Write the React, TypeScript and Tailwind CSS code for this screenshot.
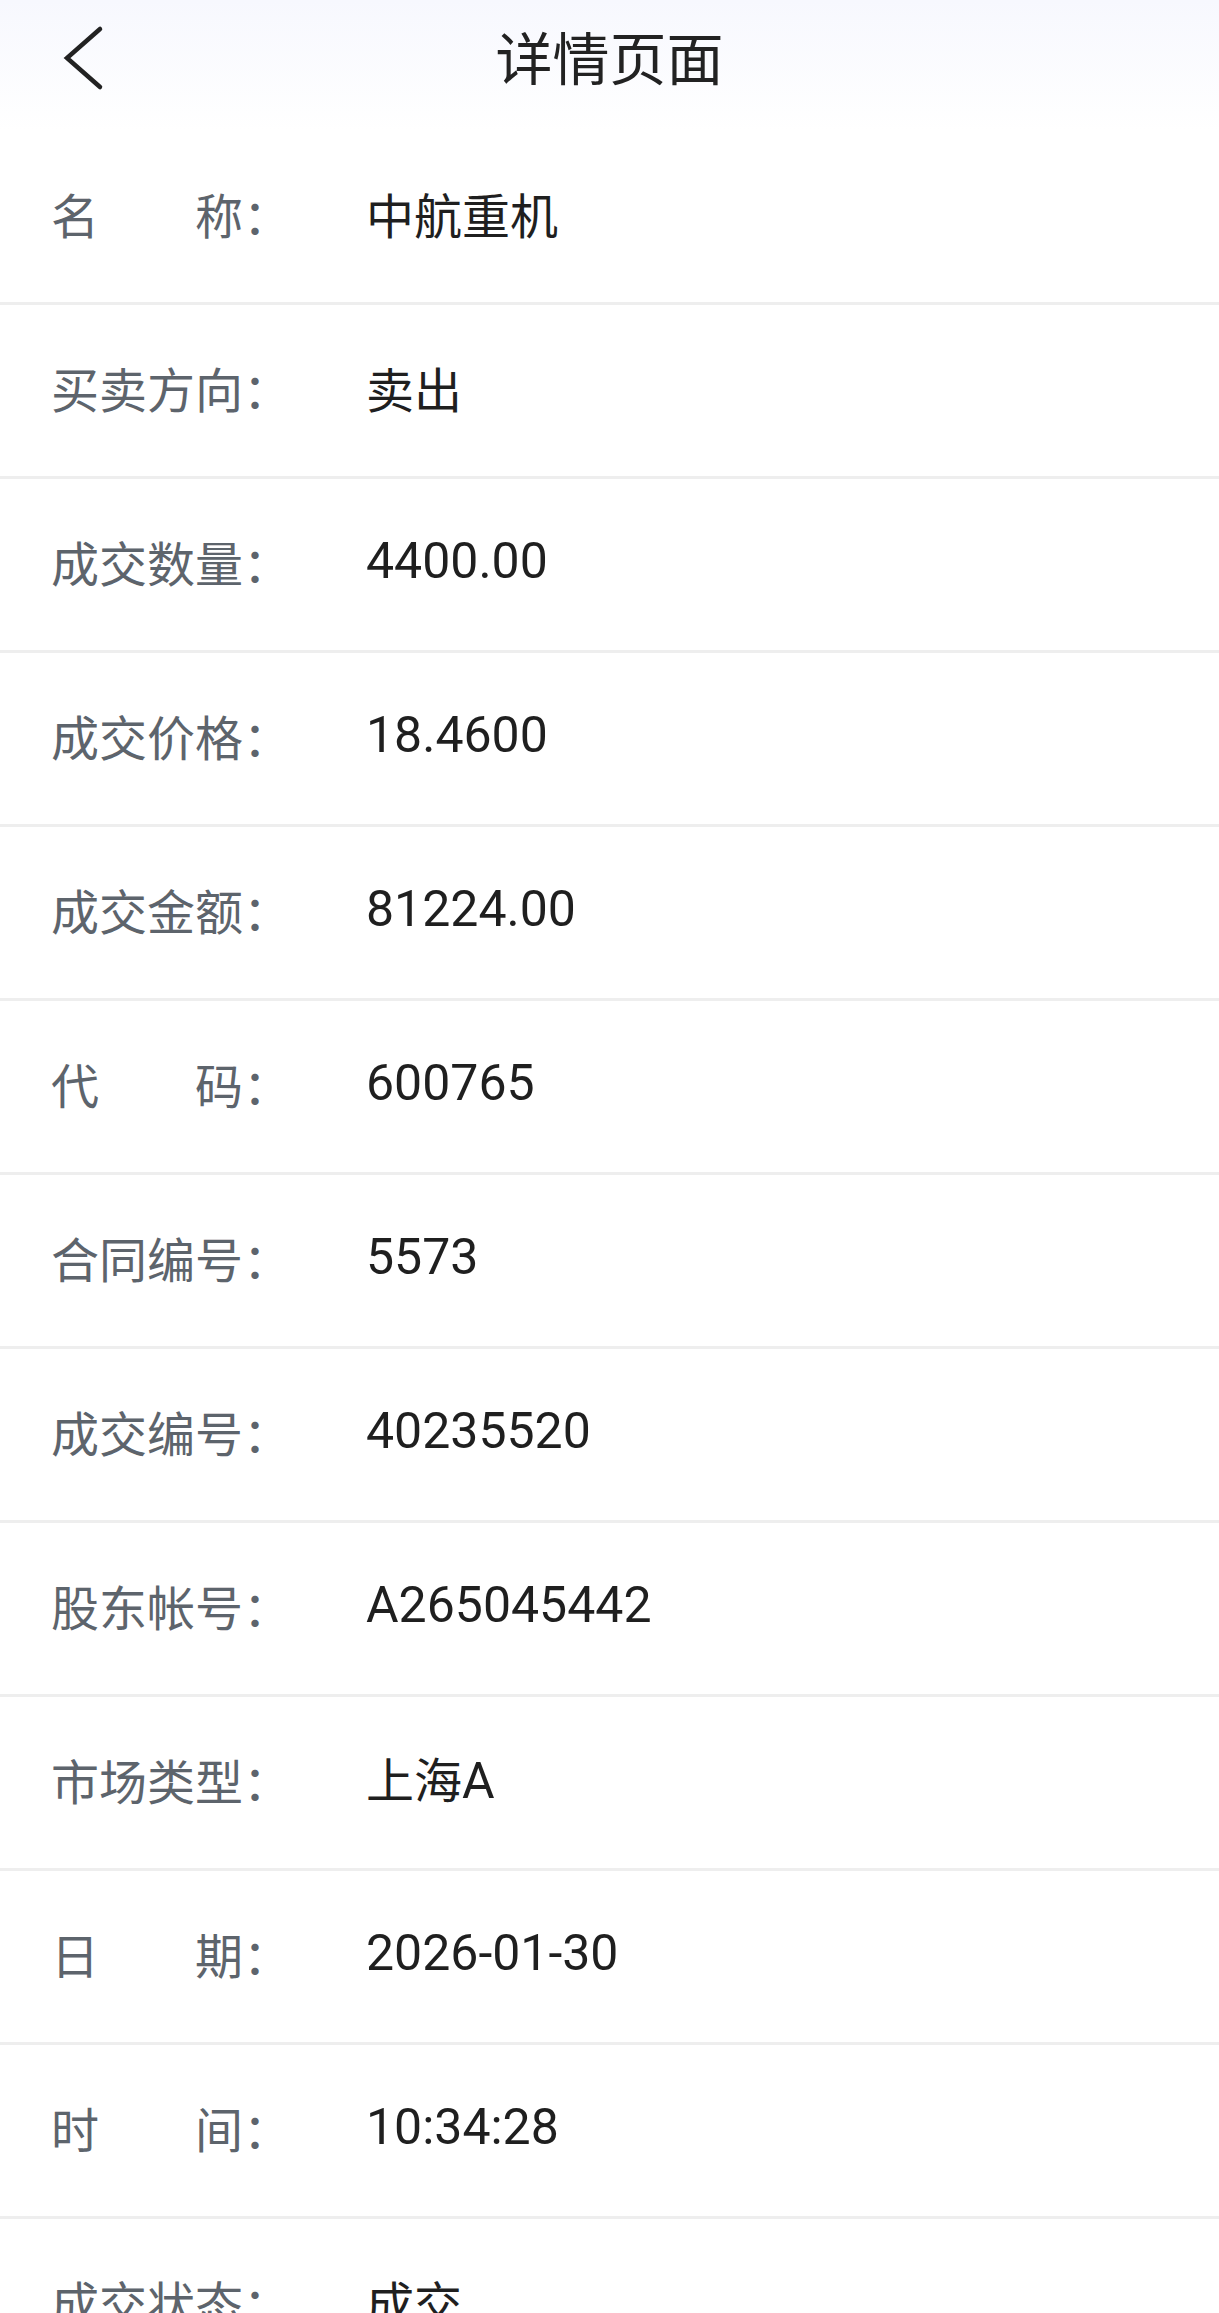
import React from "react";

const rows: { label: string[]; value: string }[] = [
  { label: ["名", "称"], value: "中航重机" },
  { label: ["买卖方向"], value: "卖出" },
  { label: ["成交数量"], value: "4400.00" },
  { label: ["成交价格"], value: "18.4600" },
  { label: ["成交金额"], value: "81224.00" },
  { label: ["代", "码"], value: "600765" },
  { label: ["合同编号"], value: "5573" },
  { label: ["成交编号"], value: "40235520" },
  { label: ["股东帐号"], value: "A265045442" },
  { label: ["市场类型"], value: "上海A" },
  { label: ["日", "期"], value: "2026-01-30" },
  { label: ["时", "间"], value: "10:34:28" },
  { label: ["成交状态"], value: "成交" },
];

const cjk = '"Noto Sans CJK SC", sans-serif';

function Value({ text }: { text: string }) {
  const runs: { s: string; c: boolean }[] = [];
  for (const ch of text) {
    const c = /[\u3000-\u9fff]/.test(ch);
    const last = runs[runs.length - 1];
    if (last && last.c === c) last.s += ch;
    else runs.push({ s: ch, c });
  }
  return (
    <div className="leading-none text-[#1f1f1f] flex items-baseline">
      {runs.map((r, i) =>
        r.c ? (
          <span key={i} className="text-[48px]" style={{ fontFamily: cjk }}>
            {r.s}
          </span>
        ) : (
          <span
            key={i}
            className="text-[50px]"
            style={{ fontFamily: 'Roboto, "Noto Sans CJK SC", sans-serif' }}
          >
            {r.s}
          </span>
        )
      )}
    </div>
  );
}

export default function App() {
  return (
    <div className="w-[1219px] min-h-[2313px] bg-white" style={{ fontFamily: cjk }}>
      <div className="h-[131px] pb-[13px] bg-gradient-to-b from-[#f7f8fe] to-white">
        <div className="relative h-[118px] flex items-center justify-center pb-[8px]">
          <svg
            className="absolute left-[60px] top-[24px]"
            width="48"
            height="70"
            viewBox="0 0 48 70"
          >
            <path
              d="M40 5 L7 34 L40 63"
              fill="none"
              stroke="#222"
              strokeWidth="4.5"
              strokeLinecap="round"
              strokeLinejoin="miter"
            />
          </svg>
          <span className="text-[57px] leading-none text-[#222]">详情页面</span>
        </div>
      </div>
      <div>
        {rows.map((r, i) => (
          <div
            key={i}
            className="h-[174px] border-b-[3px] border-[#eeeeee] flex items-center pl-[51px] pb-[7px]"
          >
            <div className="w-[315px] flex items-center text-[48px] leading-none text-[#5d646c]">
              {r.label.length === 2 ? (
                <div className="w-[192px] flex justify-between">
                  <span>{r.label[0]}</span>
                  <span>{r.label[1]}</span>
                </div>
              ) : (
                <span>{r.label[0]}</span>
              )}
              <span>：</span>
            </div>
            <Value text={r.value} />
          </div>
        ))}
      </div>
    </div>
  );
}
